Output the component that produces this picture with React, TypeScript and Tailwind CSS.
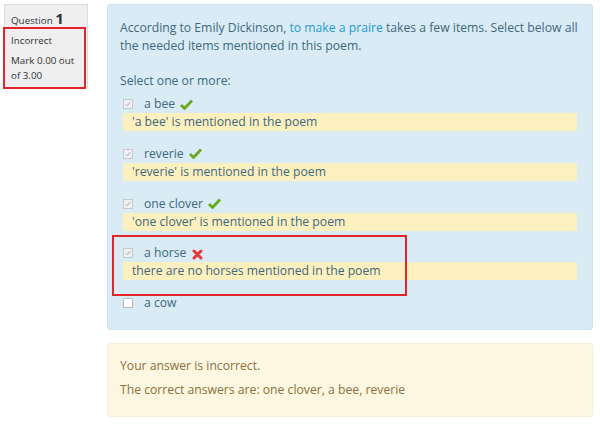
import React from "react";

type Choice = {
  label: string;
  checked: boolean;
  mark?: "right" | "wrong";
  feedback?: string;
};

const choices: Choice[] = [
  { label: "a bee", checked: true, mark: "right", feedback: "'a bee' is mentioned in the poem" },
  { label: "reverie", checked: true, mark: "right", feedback: "'reverie' is mentioned in the poem" },
  { label: "one clover", checked: true, mark: "right", feedback: "'one clover' is mentioned in the poem" },
  { label: "a horse", checked: true, mark: "wrong", feedback: "there are no horses mentioned in the poem" },
  { label: "a cow", checked: false },
];

function Tick() {
  return (
    <svg width="13" height="11" viewBox="0 0 13 11" className="ml-[5px]">
      <path d="M1 6 L4.5 9.5 L12 1.5" fill="none" stroke="#6aa81e" strokeWidth="2.8" strokeLinejoin="round" />
    </svg>
  );
}

function Cross() {
  return (
    <svg width="11" height="11" viewBox="0 0 11 11" className="ml-[6px] mt-[2px]">
      <path d="M2 2 L9 9 M9 2 L2 9" fill="none" stroke="#e8383a" strokeWidth="3" strokeLinecap="round" />
    </svg>
  );
}

function Box({ checked }: { checked: boolean }) {
  return (
    <span
      className={`flex h-[10px] w-[10px] items-center justify-center border ${
        checked ? "border-[#c4c9cc] bg-[#eef0f1]" : "border-[#b9bdc0] bg-white"
      }`}
    >
      {checked ? (
        <svg width="6" height="6" viewBox="0 0 6 6">
          <path d="M0.8 3.2 L2.4 4.8 L5.2 1" fill="none" stroke="#a9aeb2" strokeWidth="1" />
        </svg>
      ) : null}
    </span>
  );
}

export default function App() {
  return (
    <div
      className="relative h-[427px] w-[600px] overflow-hidden bg-white text-[12.2px]"
      style={{ fontFamily: '"Open Sans", "Liberation Sans", sans-serif' }}
    >
      <div className="flex gap-[19px] pl-[4px] pt-[4px]">
        <div className="h-[84px] w-[84px] shrink-0 border border-[#dcdcdc] bg-[#efefef] px-[6px] pt-[6px] text-[9.8px] leading-[15px] text-[#333]">
          <div>
            Question <span className="text-[15px] font-bold">1</span>
          </div>
          <div className="mt-[5px]">Incorrect</div>
          <div className="mt-[5px] leading-[15px]">Mark 0.00 out of 3.00</div>
        </div>

        <div className="w-[486px] shrink-0">
          <div className="h-[326px] rounded-[3px] border border-[#cde5f2] bg-[#d9ebf5] pl-[12px] pr-[8px] pt-[14px] leading-[18px] text-[#40697f]">
            <p>
              According to Emily Dickinson, <span className="text-[#1d9bd8]">to make a praire</span> takes a few items. Select below all the needed items mentioned in this poem.
            </p>
            <p className="mt-[17px]">Select one or more:</p>
            <div className="ml-[3px] mr-[7px] mt-[5px]">
              {choices.map((c) => (
                <div key={c.label} className="mb-[13.75px]">
                  <div className="flex h-[18px] items-center">
                    <Box checked={c.checked} />
                    <span className="ml-[11px]">{c.label}</span>
                    {c.mark === "right" ? <Tick /> : null}
                    {c.mark === "wrong" ? <Cross /> : null}
                  </div>
                  {c.feedback ? (
                    <div className="h-[18px] bg-[#fdf0bf] pl-[9px] leading-[18px]">{c.feedback}</div>
                  ) : null}
                </div>
              ))}
            </div>
          </div>

          <div className="mt-[13px] h-[74px] rounded-[3px] border border-[#f7efd2] bg-[#fcf7e1] px-[12px] pt-[10px] leading-[24px] text-[#8d7040]">
            <p>Your answer is incorrect.</p>
            <p>The correct answers are: one clover, a bee, reverie</p>
          </div>
        </div>
      </div>

      <div className="absolute left-[3px] top-[27px] h-[62px] w-[83px] border-2 border-[#e5232b]" />
      <div className="absolute left-[112px] top-[235px] h-[61px] w-[295px] border-2 border-[#e5232b]" />
    </div>
  );
}
